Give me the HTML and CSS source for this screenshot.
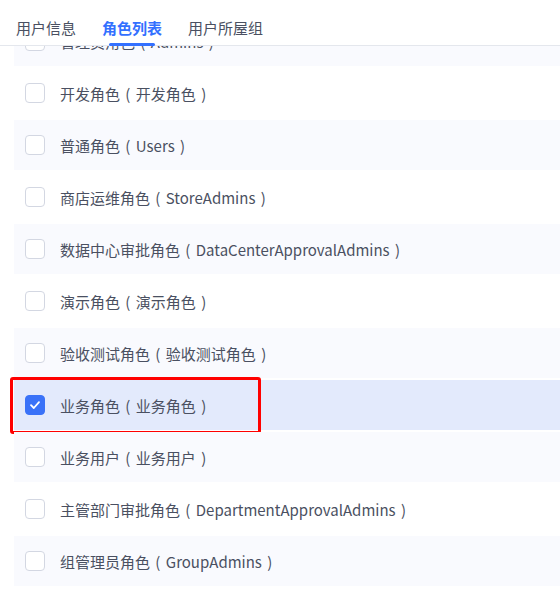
FILE: index.html
```html
<!DOCTYPE html>
<html lang="zh-CN">
<head>
  <meta charset="UTF-8" />
  <meta name="viewport" content="width=device-width, initial-scale=1.0"/>
  <title>角色列表</title>
  <link rel="stylesheet" href="styles.css">
</head>
<body>

  <div class="tabs">
    <div class="tab">用户信息</div>
    <div class="tab active">角色列表</div>
    <div class="tab">用户所屋组</div>
  </div>

  <div class="list-viewport">
    <div class="role-list">
      <div class="role"><span class="check"></span><span class="role-name">管理员角色 ( Admins )</span></div>
      <div class="role"><span class="check"></span><span class="role-name">开发角色 ( 开发角色 )</span></div>
      <div class="role"><span class="check"></span><span class="role-name">普通角色 ( Users )</span></div>
      <div class="role"><span class="check"></span><span class="role-name">商店运维角色 ( StoreAdmins )</span></div>
      <div class="role"><span class="check"></span><span class="role-name">数据中心审批角色 ( DataCenterApprovalAdmins )</span></div>
      <div class="role"><span class="check"></span><span class="role-name">演示角色 ( 演示角色 )</span></div>
      <div class="role"><span class="check"></span><span class="role-name">验收测试角色 ( 验收测试角色 )</span></div>
      <div class="role selected">
        <span class="check checked">
          <svg width="12" height="12" viewBox="0 0 12 12"><path d="M2 6.2 L4.8 9 L10 3.2" fill="none" stroke="#fff" stroke-width="1.8" stroke-linecap="round" stroke-linejoin="round"/></svg>
        </span>
        <span class="role-name">业务角色 ( 业务角色 )</span>
        <div class="highlight"></div>
      </div>
      <div class="role"><span class="check"></span><span class="role-name">业务用户 ( 业务用户 )</span></div>
      <div class="role"><span class="check"></span><span class="role-name">主管部门审批角色 ( DepartmentApprovalAdmins )</span></div>
      <div class="role"><span class="check"></span><span class="role-name">组管理员角色 ( GroupAdmins )</span></div>
    </div>
  </div>

</body>
</html>
```

FILE: styles.css
```css
body {
  margin: 0;
  background-color: #fff;
  font-family: "Noto Sans CJK SC", "Noto Sans", sans-serif;
  color: #4a5061;
  overflow: hidden;
}

.tabs {
  display: flex;
  gap: 26px;
  height: 45px;
  padding-left: 16px;
  border-bottom: 1px solid #e4e7ed;
  position: relative;
  z-index: 2;
  background-color: #fff;
}

.tab {
  position: relative;
  font-size: 15px;
  line-height: 20px;
  padding-top: 18px;
  height: 27px;
  color: #4a5061;
}

.tab.active {
  color: #3370ff;
  font-weight: bold;
}

.tab.active::after {
  content: "";
  position: absolute;
  left: 7px;
  bottom: -1px;
  width: 46px;
  height: 3px;
  border-radius: 2px;
  background-color: #3370ff;
}

.list-viewport {
  height: 559px;
  overflow: hidden;
}

.role-list {
  margin-top: -30px;
  padding-left: 14px;
}

.role {
  position: relative;
  display: flex;
  align-items: center;
  gap: 15px;
  height: 50px;
  margin-bottom: 2px;
  padding-left: 11px;
  font-size: 15px;
  word-spacing: 2px;
}

.role:nth-child(odd) {
  background-color: #f9fafe;
}

.role.selected {
  background-color: #e3eafc;
}

.check {
  display: flex;
  align-items: center;
  justify-content: center;
  width: 18px;
  height: 18px;
  border: 1px solid #d3d7e2;
  border-radius: 4px;
  background-color: #fff;
  flex-shrink: 0;
}

.check.checked {
  background-color: #3a72f8;
  border-color: #3a72f8;
}

.highlight {
  position: absolute;
  left: -4px;
  top: -3px;
  width: 245px;
  height: 51px;
  border: 3px solid #ff0000;
  border-radius: 3px;
}
```
